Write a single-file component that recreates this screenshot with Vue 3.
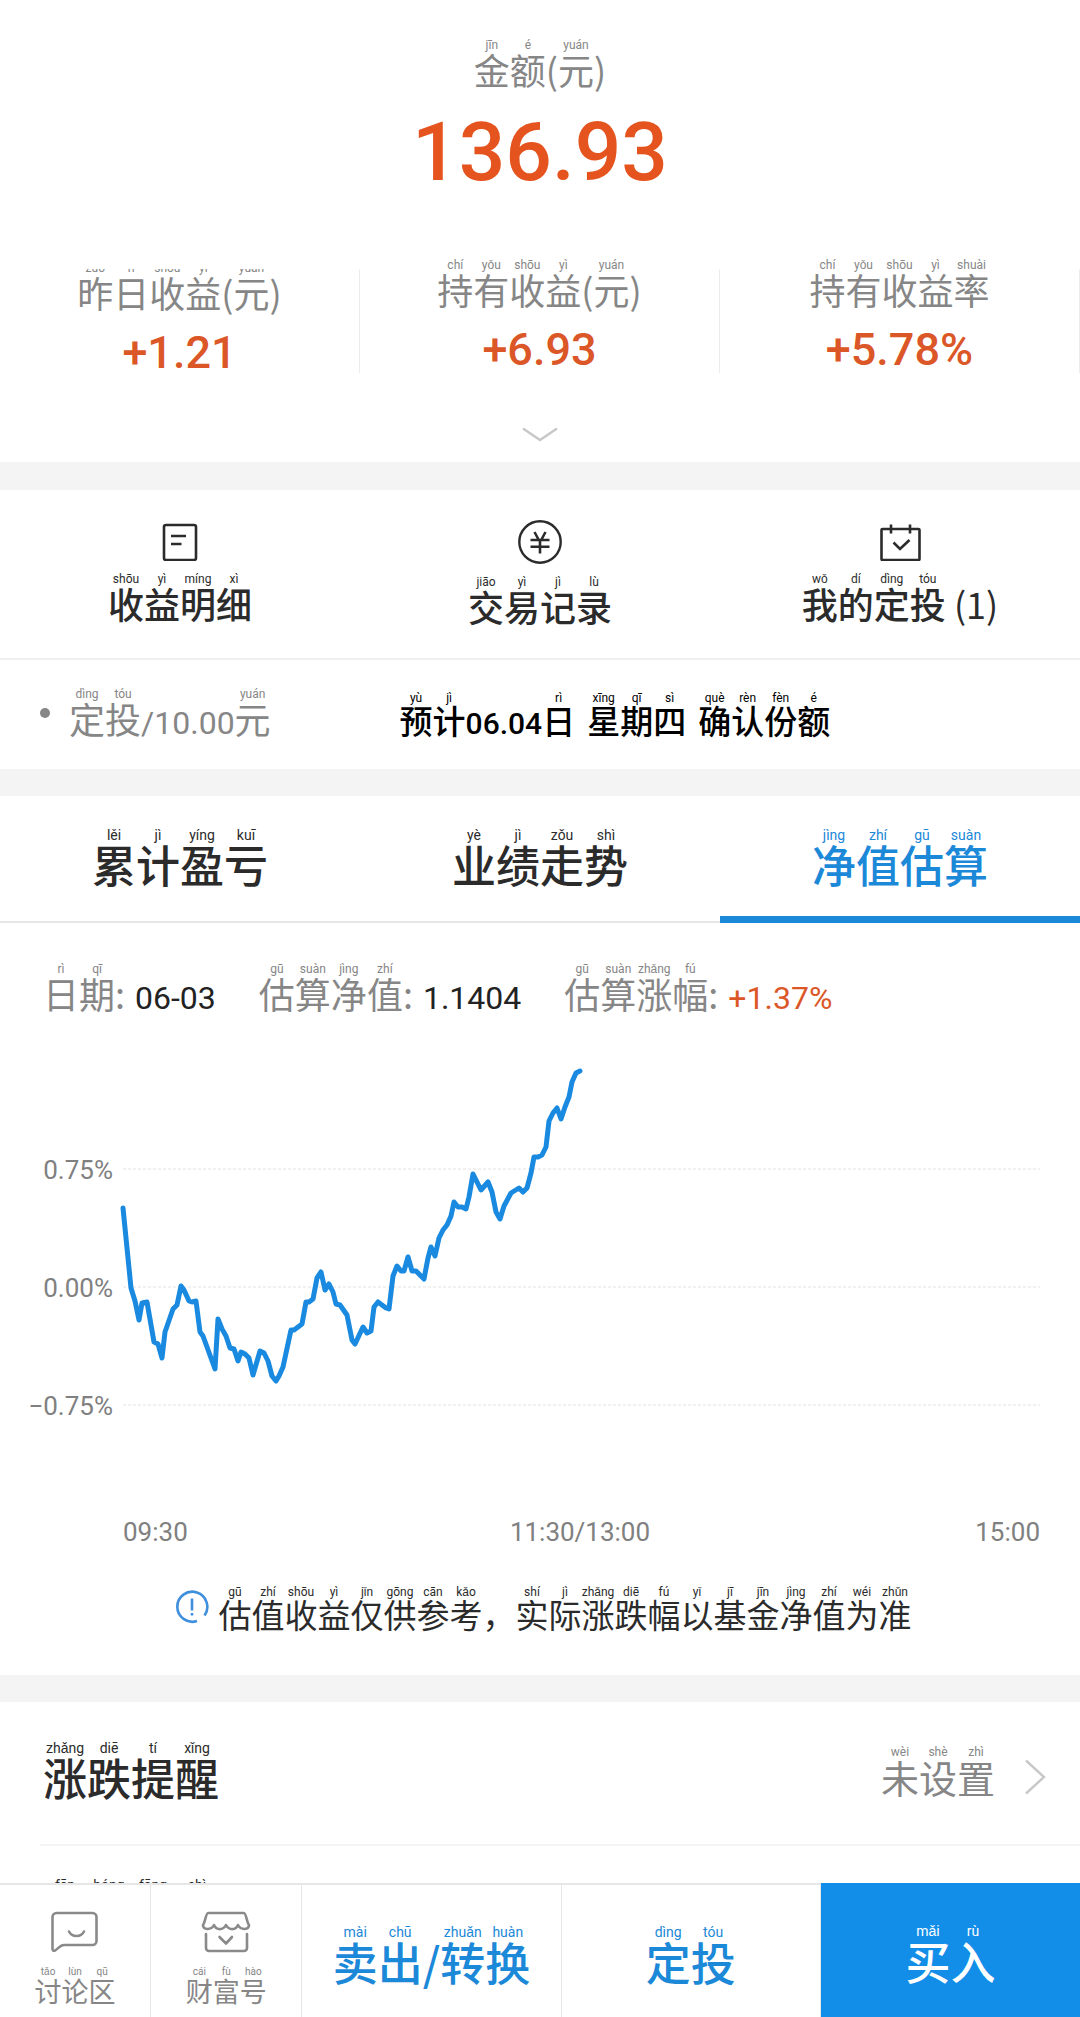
<script setup>
import { h } from 'vue'

// Turns "金jīn|额é|(" into base characters with pinyin above them.
const Py = ({ t }) =>
  h('span', { class: 'py' }, t.split('|').map((part) => {
    const m = part.match(/^([\u4e00-\u9fff])(.+)$/)
    return m ? h('ruby', [m[1], h('rt', m[2])]) : h('span', part)
  }))
Py.props = ['t']

const stats = [
  { label: '昨zuó|日rì|收shōu|益yì|(|元yuán|)', value: '+1.21' },
  { label: '持chí|有yǒu|收shōu|益yì|(|元yuán|)', value: '+6.93' },
  { label: '持chí|有yǒu|收shōu|益yì|率shuài', value: '+5.78%' }
]
const tabs = ['累lěi|计jì|盈yíng|亏kuī', '业yè|绩jì|走zǒu|势shì', '净jìng|值zhí|估gū|算suàn']
const info = [
  { label: '日rì|期qī|:', value: '06-03' },
  { label: '估gū|算suàn|净jìng|值zhí|:', value: '1.1404' },
  { label: '估gū|算suàn|涨zhǎng|幅fú|:', value: '+1.37%', up: true }
]
const grid = [
  { y: 129, label: '0.75%' },
  { y: 247, label: '0.00%' },
  { y: 365, label: '−0.75%' }
]
const line = '123,168 131,248 135,261 139,280 142,263 147,262 154,302 158,304 162,318 165,292 173,269 177,265 181,246 184,250 189,261 192,262 196,261 200,292 203,296 215,329 218,279 222,289 226,296 230,308 234,309 238,321 241,312 245,314 249,318 253,335 260,311 264,313 268,321 272,336 276,341 279,336 283,327 291,290 294,290 302,284 306,262 309,262 313,259 317,238 321,232 325,250 329,244 333,252 336,264 340,265 347,275 352,300 355,304 363,287 367,293 371,291 374,267 378,262 386,268 389,269 393,236 397,226 401,231 404,231 408,217 412,231 416,231 424,239 428,218 431,207 435,216 439,198 443,190 447,185 451,176 454,162 458,167 462,167 466,169 469,157 473,134 481,150 488,142 492,152 496,172 500,179 504,166 511,153 519,148 523,152 527,148 531,133 534,117 538,117 542,115 546,107 549,81 553,73 557,68 561,79 565,67 569,57 572,42 576,33 580,31'
</script>

<template>
  <div class="app">
    <main>
      <section class="summary">
        <div class="label"><Py t="金jīn|额é|(|元yuán|)" /></div>
        <div class="amount">136.93</div>
        <div class="stats">
          <div v-for="s in stats" :key="s.value" class="stat">
            <div class="label"><Py :t="s.label" /></div>
            <div class="gain">{{ s.value }}</div>
          </div>
        </div>
        <button class="expand" aria-label="展开">
          <svg width="36" height="16" viewBox="0 0 36 16"><path d="M1 1.5 18 13 35 1.5" fill="none" stroke="#c8c8c8" stroke-width="2.4" /></svg>
        </button>
      </section>

      <section class="links">
        <a href="#">
          <svg width="44" height="41" viewBox="0 0 44 41" fill="none" stroke="#2b2b2b" stroke-width="2.6"><rect x="6" y="5" width="32" height="35" rx="2" /><path d="M13 16h15M13 24h10.5" /></svg>
          <Py t="收shōu|益yì|明míng|细xì" />
        </a>
        <a href="#">
          <svg width="44" height="44" viewBox="0 0 44 44" fill="none" stroke="#2b2b2b" stroke-width="2.4"><circle cx="22" cy="22" r="20.7" /><path d="M16.500 12l4 7.500M27.500 12l-4 7.500M12.500 20h19M12.500 26.800h19M22 20v13.500" stroke-width="2.600" /></svg>
          <Py t="交jiāo|易yì|记jì|录lù" />
        </a>
        <a href="#">
          <svg width="44" height="41" viewBox="0 0 44 41" fill="none" stroke="#2b2b2b" stroke-width="2.600"><rect x="3.500" y="9" width="38" height="31" rx="1" /><path d="M13 4.500v9M32 4.500v9M15.500 22.500l6.500 6.500 9.500-9" /></svg>
          <Py t="我wǒ|的dí|定dìng|投tóu| (1)" />
        </a>
      </section>

      <section class="plan">
        <div class="plan-name"><i></i><Py t="定dìng|投tóu" /><span class="num">/10.00</span><Py t="元yuán" /></div>
        <div class="plan-date">
          <span><Py t="预yù|计jì" /><span class="num">06.04</span><Py t="日rì" /></span>
          <Py t="星xīng|期qī|四sì" />
          <Py t="确què|认rèn|份fèn|额é" />
        </div>
      </section>

      <nav class="tabs">
        <button v-for="(t, i) in tabs" :key="t" :class="{ active: i === 2 }"><Py :t="t" /></button>
      </nav>

      <section class="estimate">
        <div class="info">
          <div v-for="r in info" :key="r.value" :class="{ up: r.up }"><Py :t="r.label" /><b>{{ r.value }}</b></div>
        </div>
        <svg class="chart" viewBox="0 0 1080 520">
          <g v-for="g in grid" :key="g.y">
            <line x1="123" x2="1040" :y1="g.y" :y2="g.y" stroke="#e2e2e2" stroke-width="1" stroke-dasharray="3 2" />
            <text x="113" :y="g.y + 10" text-anchor="end">{{ g.label }}</text>
          </g>
          <polyline :points="line" fill="none" stroke="#1a8ae0" stroke-width="5" stroke-linejoin="round" stroke-linecap="round" />
          <text x="123" y="501">09:30</text>
          <text x="580" y="501" text-anchor="middle">11:30/13:00</text>
          <text x="1040" y="501" text-anchor="end">15:00</text>
        </svg>
        <p class="notice">
          <svg width="34" height="34" viewBox="0 0 34 34" fill="none" stroke="#3f8fdc" stroke-width="2.600"><path d="M22 31A15 15 0 1 1 29.500 25.500" /><path d="M17 8.500v12M17 23v2.500" /></svg>
          <Py t="估gū|值zhí|收shōu|益yì|仅jǐn|供gōng|参cān|考kǎo|，|实shí|际jì|涨zhǎng|跌diē|幅fú|以yǐ|基jī|金jīn|净jìng|值zhí|为wéi|准zhǔn" />
        </p>
      </section>

      <section class="settings">
        <a href="#" class="row">
          <Py t="涨zhǎng|跌diē|提tí|醒xǐng" />
          <span class="state"><Py t="未wèi|设shè|置zhì" /></span>
          <svg width="22" height="36" viewBox="0 0 22 36"><path d="M2 1.500 20 18 2 34.500" fill="none" stroke="#c8c8c8" stroke-width="2.400" /></svg>
        </a>
        <a href="#" class="row next"><Py t="分fēn|红hóng|方fāng|式shì" /></a>
      </section>
    </main>

    <footer>
      <button class="small">
        <svg width="50" height="42" viewBox="0 0 50 42" fill="none" stroke="#8a8a8a" stroke-width="2.600" stroke-linejoin="round" stroke-linecap="round"><path d="M6.500 2h36a4 4 0 0 1 4 4v24a4 4 0 0 1-4 4H14c-4 0-6 4-9 5.500-1.500.5-2.500 0-2.500-1.500V6a4 4 0 0 1 4-4z" /><path d="M19 20.500c3 6 12 6 15 0" /></svg>
        <Py t="讨tǎo|论lùn|区qū" />
      </button>
      <button class="small">
        <svg width="50" height="42" viewBox="0 0 50 42" fill="none" stroke="#8a8a8a" stroke-width="2.600" stroke-linejoin="round" stroke-linecap="round"><path d="M7 2h36c2 0 3 10 5 12 0 5-8 5.500-11 0-2.500 5.500-9 5.500-12 0-3 5.500-9.500 5.500-12 0-3 5.500-11 5-11 0 2-2 3-12 5-12zM5 23v14a3 3 0 0 0 3 3h35a3 3 0 0 0 3-3V23M18.500 26l6.500 6.500 6-6.500" /></svg>
        <Py t="财cái|富fù|号hào" />
      </button>
      <button><Py t="卖mài|出chū|/|转zhuǎn|换huàn" /></button>
      <button><Py t="定dìng|投tóu" /></button>
      <button class="buy"><Py t="买mǎi|入rù" /></button>
    </footer>
  </div>
</template>

<style>
html, body { margin: 0; background: #fff; }
.py { white-space: pre; }
.py ruby { display: inline-block; position: relative; }
.py rt {
  display: block;
  position: absolute;
  left: -10px;
  right: -10px;
  bottom: 100%;
  font: 400 var(--rt, 12px)/1 "Roboto", sans-serif;
  text-align: center;
}
</style>

<style scoped>
.app {
  height: 100vh;
  display: flex;
  flex-direction: column;
  font: 400 36px/1 "Noto Sans CJK SC", sans-serif;
  color: #2b2b2b;
}
main { flex: 1; min-height: 0; overflow: hidden; }
button { border: 0; margin: 0; padding: 0; background: none; font: inherit; color: inherit; }
a { color: inherit; text-decoration: none; }
svg { display: block; flex: none; }

.summary { padding-top: 51px; text-align: center; border-bottom: 28px solid #f4f4f4; }
.label { color: #868686; }
.amount { margin-top: 20px; font: 500 82px/90px "Roboto", sans-serif; color: #e5541e; }
.stats { display: grid; grid-template-columns: repeat(3, 1fr); height: 101px; margin-top: 72px; }
.stat { padding-top: 2px; border-right: 1px solid #ececec; }
.stat:first-child { padding-top: 5px; overflow: hidden; }
.gain { margin-top: 20px; font: 500 45px/46px "Roboto", sans-serif; color: #dc5727; }
.expand { display: block; margin: 57px auto 19px; }

.links { display: grid; grid-template-columns: repeat(3, 1fr); padding: 30px 0 34px; border-bottom: 2px solid #f0f0f0; }
.links a { display: flex; flex-direction: column; align-items: center; gap: 24px; font-weight: 500; }
.links :deep(.py > span) { font-weight: 400; }

.plan { display: grid; grid-template-columns: 37% 1fr; align-items: baseline; height: 109px; padding-top: 40px; box-sizing: border-box; }
.plan-name { padding-left: 40px; color: #868686; }
.plan-name i { display: inline-block; width: 10px; height: 10px; margin-right: 19px; border-radius: 50%; background: #868686; vertical-align: 16px; }
.plan-name .num { font: 32px/1 "Roboto", sans-serif; }
.plan-date { display: flex; gap: 12px; font-size: 33px; font-weight: 500; color: #000; }
.plan-date .num { font: 500 30px/1 "Roboto", sans-serif; }

.tabs { display: grid; grid-template-columns: repeat(3, 1fr); border-top: 27px solid #f4f4f4; --rt: 14px; }
.tabs button { display: flex; justify-content: center; align-items: flex-start; height: 127px; padding-top: 46px; border-bottom: 2px solid #e6e6e6; font-size: 44px; font-weight: 500; }
.tabs .active { color: #1c88d8; border-bottom: 7px solid #1c88d8; }

.estimate { padding-top: 52px; border-bottom: 27px solid #f4f4f4; }
.info { display: flex; gap: 43px; padding-left: 43px; color: #868686; }
.info > div { display: flex; align-items: baseline; gap: 10px; }
.info b { font: 32px/1 "Roboto", sans-serif; color: #222; }
.info .up b { color: #dc5727; }
.chart { width: 100%; margin-top: 26px; }
.chart text { font: 26px "Roboto", sans-serif; fill: #808080; }
.notice { display: flex; justify-content: center; gap: 10px; margin: 0; padding: 38px 0 44px 6px; font-size: 33px; }
.notice svg { margin-top: -8px; }

.settings { --rt: 14px; }
.row { display: flex; align-items: center; height: 144px; margin-left: 40px; padding: 8px 34px 0 3px; border-bottom: 2px solid #f4f4f4; font-size: 44px; font-weight: 500; box-sizing: border-box; }
.next { padding: 0 34px 6px 3px; }
.state { --rt: 12px; margin: 0 29px 0 auto; font-size: 38px; font-weight: 400; color: #868686; }

footer { display: grid; grid-template-columns: 14fr 14fr 24fr 24fr 24fr; height: 134px; border-top: 2px solid #e6e6e6; box-sizing: border-box; background: #fff; --rt: 14px; font-size: 45px; font-weight: 500; color: #1c88d8; }
footer button { border-right: 1px solid #e6e6e6; padding-top: 20px; }
footer .small { display: flex; flex-direction: column; align-items: center; gap: 24px; padding-top: 26px; font-size: 27px; font-weight: 400; color: #868686; --rt: 10px; }
footer .buy { margin-top: -2px; border: 0; background: #128ee9; color: #fff; }
</style>
